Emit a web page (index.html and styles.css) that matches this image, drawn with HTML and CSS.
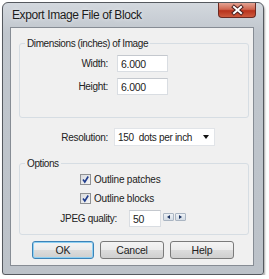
FILE: index.html
```html
<!DOCTYPE html>
<html lang="en">

<head>
  <meta charset="UTF-8">
  <title>Export Image File of Block</title>
  <link rel="stylesheet" href="styles.css">
</head>

<body>
  <div class="window">
    <div class="titlebar">
      <span class="titlebar__text">Export Image File of Block</span>
      <div class="titlebar__close">
        <svg width="38" height="15" viewBox="0 0 38 15">
          <path d="M15 4 L22 10 M22 4 L15 10" stroke="#4a2020" stroke-width="4" stroke-linecap="square" fill="none" />
          <path d="M15 4 L22 10 M22 4 L15 10" stroke="#fff" stroke-width="2" stroke-linecap="square" fill="none" />
        </svg>
      </div>
    </div>

    <div class="client">
      <fieldset class="group group--dims">
        <legend>Dimensions (inches) of Image</legend>
        <div class="dims">
          <label class="dims__label">Width:</label>
          <input class="field dims__input" type="text" value="6.000">
          <label class="dims__label">Height:</label>
          <input class="field dims__input" type="text" value="6.000">
        </div>
      </fieldset>

      <div class="resolution">
        <label class="resolution__label">Resolution:</label>
        <div class="combo">
          <span>150&nbsp; dots per inch</span>
          <span class="combo__arrow"></span>
        </div>
      </div>

      <fieldset class="group group--opts">
        <legend>Options</legend>
        <div class="check">
          <span class="check__box">
            <svg width="9" height="9" viewBox="0 0 9 9">
              <path d="M2 4.5 L3.8 7 L7.2 1.5" stroke="#1f3c8c" stroke-width="1.6" fill="none" />
            </svg>
          </span>
          Outline patches
        </div>
        <div class="check">
          <span class="check__box">
            <svg width="9" height="9" viewBox="0 0 9 9">
              <path d="M2 4.5 L3.8 7 L7.2 1.5" stroke="#1f3c8c" stroke-width="1.6" fill="none" />
            </svg>
          </span>
          Outline blocks
        </div>
        <div class="quality">
          <label class="quality__label">JPEG quality:</label>
          <input class="field quality__input" type="text" value="50">
          <div class="spin">
            <span class="spin__btn"><span class="spin__left"></span></span>
            <span class="spin__btn"><span class="spin__right"></span></span>
          </div>
        </div>
      </fieldset>

      <div class="buttons">
        <button class="btn btn--default">OK</button>
        <button class="btn">Cancel</button>
        <button class="btn">Help</button>
      </div>
    </div>
  </div>
</body>

</html>
```

FILE: styles.css
```css
/*Обнуление*/
* {
  padding: 0;
  margin: 0;
  border: 0;
}

*,
*:before,
*:after {
  box-sizing: border-box;
}

input,
button {
  font-family: inherit;
  font-size: inherit;
  color: inherit;
  outline: none;
}

/*--------------------*/
body {
  background: #fff;
  font-family: 'Liberation Sans', Arial, sans-serif;
  font-size: 10px;
  color: #222;
  white-space: nowrap;
}

.window {
  width: 262px;
  height: 273px;
  margin: 2px 0 0 2px;
  display: flex;
  flex-direction: column;
  border: 1px solid #55595f;
  border-radius: 6px 6px 3px 3px;
  background: linear-gradient(#d3d8de, #c0c6cd 30px, #bcc2c9);
  box-shadow: 1px 2px 2px rgba(0, 0, 0, 0.35);
}

.titlebar {
  height: 24px;
  display: flex;
  justify-content: space-between;
  align-items: center;
}

.titlebar__text {
  padding-left: 9px;
  font-size: 12px;
  letter-spacing: -0.4px;
  color: #1c1c1c;
  text-shadow: 0 0 4px rgba(255, 255, 255, 0.8);
}

.titlebar__close {
  align-self: flex-start;
  width: 38px;
  height: 15px;
  margin-right: 7px;
  border: 1px solid #6b2a22;
  border-top: 0;
  border-radius: 0 0 4px 4px;
  background: linear-gradient(#e4a393, #cf6650 45%, #b8321c 55%, #cd5a3e);
}

.titlebar__close svg {
  display: block;
}

.client {
  flex: 1;
  margin: 0 9px 8px 7px;
  padding-top: 9px;
  border: 1px solid #868c94;
  background: #f0f0f0;
}

.group {
  margin: 0 4px 0 8px;
  border: 1px solid #d6dde3;
  border-radius: 3px;
}

.group legend {
  margin-left: 5px;
  padding: 0 2px;
  line-height: 13px;
  letter-spacing: -0.4px;
}

.group--dims {
  padding: 5px 0 22px;
}

.dims {
  display: grid;
  grid-template-columns: 88px 51px;
  grid-auto-rows: 17px;
  column-gap: 9px;
  row-gap: 6px;
  align-items: center;
}

.dims__label,
.resolution__label,
.quality__label {
  text-align: right;
  letter-spacing: -0.3px;
}

.field {
  height: 17px;
  padding: 0 3px;
  border: 1px solid #d9dde2;
  border-top-color: #c4c8ce;
  background: #fff;
  font-size: 10.5px;
  letter-spacing: -0.3px;
}

.resolution {
  display: flex;
  align-items: center;
  gap: 6px;
  margin: 10px 0 11px 11px;
}

.resolution__label {
  width: 86px;
}

.combo {
  width: 101px;
  height: 18px;
  display: flex;
  align-items: center;
  justify-content: space-between;
  padding: 0 5px 0 3px;
  border: 1px solid #e1e4e8;
  background: #fff;
  font-size: 10px;
  letter-spacing: -0.3px;
}

.combo__arrow {
  width: 0;
  height: 0;
  border-left: 3.5px solid transparent;
  border-right: 3.5px solid transparent;
  border-top: 4px solid #111;
}

.group--opts {
  padding: 0 0 7px;
}

.check {
  height: 19px;
  display: flex;
  align-items: center;
  gap: 3px;
  padding-left: 60px;
  letter-spacing: -0.2px;
}

.check__box {
  width: 11px;
  height: 11px;
  display: flex;
  align-items: center;
  justify-content: center;
  border: 1px solid #8f9194;
  background: linear-gradient(135deg, #d8dadd, #f6f6f6);
}

.quality {
  display: flex;
  align-items: center;
  margin-top: 2px;
}

.quality__label {
  width: 97px;
  margin-right: 12px;
}

.quality__input {
  width: 32px;
}

.spin {
  display: flex;
  gap: 1px;
  margin: 0 0 4px 2px;
}

.spin__btn {
  width: 11px;
  height: 8px;
  display: flex;
  align-items: center;
  justify-content: center;
  border: 1px solid #aab5c2;
  border-radius: 1px;
  background: linear-gradient(#eef2f6, #d3dbe4);
}

.spin__left,
.spin__right {
  width: 0;
  height: 0;
  border-top: 2.5px solid transparent;
  border-bottom: 2.5px solid transparent;
}

.spin__left {
  border-right: 3px solid #1d3563;
}

.spin__right {
  border-left: 3px solid #1d3563;
}

.buttons {
  display: flex;
  gap: 6px;
  margin: 6px 0 0 21px;
}

.btn {
  width: 64px;
  height: 18px;
  border: 1px solid #7a7a7a;
  border-radius: 3px;
  background: linear-gradient(#f4f4f4, #ebebeb 50%, #dcdcdc 51%, #cfcfcf);
  font-size: 10.5px;
  letter-spacing: -0.2px;
  cursor: pointer;
}

.btn--default {
  width: 62px;
  border-color: #3c83b8;
  box-shadow: inset 0 0 0 1px #8fd0f2;
}
```
